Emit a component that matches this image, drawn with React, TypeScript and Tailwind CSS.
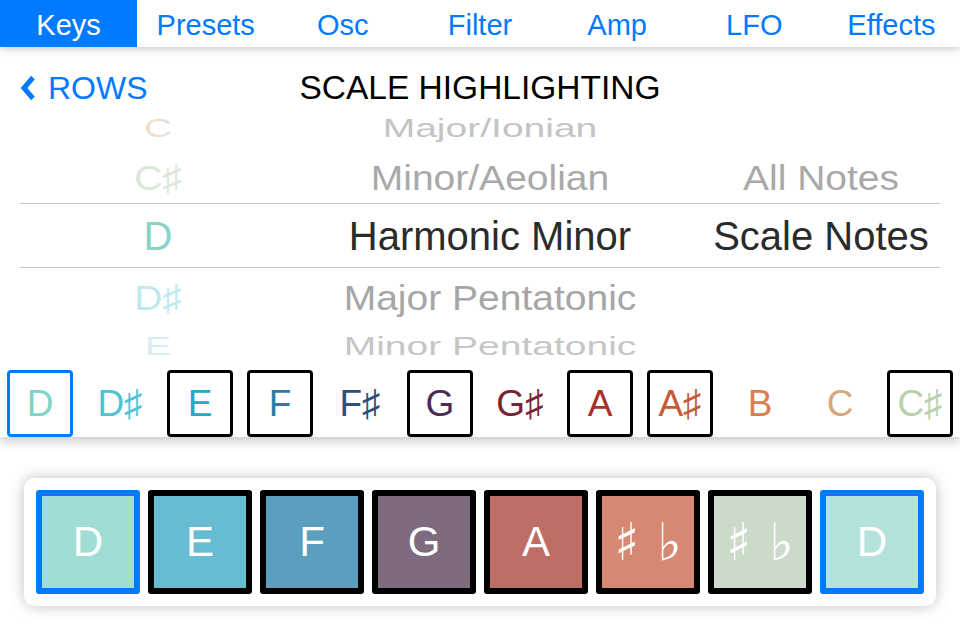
import React from "react";

const tabs = ["Keys", "Presets", "Osc", "Filter", "Amp", "LFO", "Effects"];

type Key = { n: string; c: string; box: "blue" | "black" | null };
const keys: Key[] = [
  { n: "D", c: "#7fd4c6", box: "blue" },
  { n: "D♯", c: "#4fc3d4", box: null },
  { n: "E", c: "#2aa6c6", box: "black" },
  { n: "F", c: "#2a7ea6", box: "black" },
  { n: "F♯", c: "#2f4e7b", box: null },
  { n: "G", c: "#4b2d50", box: "black" },
  { n: "G♯", c: "#7a2334", box: null },
  { n: "A", c: "#a9312b", box: "black" },
  { n: "A♯", c: "#c85a36", box: "black" },
  { n: "B", c: "#d97e4e", box: null },
  { n: "C", c: "#d8a67b", box: null },
  { n: "C♯", c: "#b6d0ab", box: "black" },
];

type Sq = { t: string; bg: string; blue?: boolean; acc?: boolean };
const squares: Sq[] = [
  { t: "D", bg: "#a0ddd4", blue: true },
  { t: "E", bg: "#67bcd2" },
  { t: "F", bg: "#5b9ebd" },
  { t: "G", bg: "#7e6b80" },
  { t: "A", bg: "#bd6e65" },
  { t: "", bg: "#d68873", acc: true },
  { t: "", bg: "#ccdbc9", acc: true },
  { t: "D", bg: "#b3e3dc", blue: true },
];

function PickerRow(props: {
  h: string;
  sy: number;
  size?: string;
  note: string;
  noteColor: string;
  name: string;
  nameColor: string;
  third?: string;
}) {
  const s = { transform: `scaleY(${props.sy})` };
  return (
    <div
      className={
        props.h +
        " grid grid-cols-[316px_348px_1fr] items-center leading-none whitespace-nowrap " +
        (props.size ?? "text-[39px]")
      }
    >
      <div className="flex justify-center">
        <span style={{ ...s, color: props.noteColor }}>{props.note}</span>
      </div>
      <div className="flex justify-center">
        <span style={{ ...s, color: props.nameColor }}>{props.name}</span>
      </div>
      <div className="flex justify-center pl-[18px]">
        <span style={{ ...s, color: props.nameColor }}>{props.third ?? ""}</span>
      </div>
    </div>
  );
}

export default function App() {
  return (
    <div
      className="w-[960px] h-[640px] bg-white overflow-hidden flex flex-col"
      style={{ fontFamily: '"Liberation Sans", Arial, "DejaVu Sans", sans-serif' }}
    >
      {/* Tab bar */}
      <div className="relative z-20 h-[47px] shrink-0 grid grid-cols-7 bg-white shadow-[0_2px_8px_rgba(0,0,0,0.22)]">
        {tabs.map((t, i) => (
          <div
            key={t}
            className={
              "flex items-center justify-center pt-[3px] text-[29px] leading-none " +
              (i === 0 ? "bg-[#007aff] text-white" : "text-[#007aff]")
            }
          >
            {t}
          </div>
        ))}
      </div>

      {/* Top panel */}
      <div className="relative z-10 h-[390px] shrink-0 bg-white shadow-[0_4px_10px_rgba(0,0,0,0.22)] flex flex-col">
        {/* Header */}
        <div className="h-[57px] shrink-0 pt-[25px] grid grid-cols-3 text-[32px] leading-[32px]">
          <div className="flex items-center pl-[20px] text-[#007aff]">
            <svg width="16" height="26" viewBox="0 0 16 26" className="mr-[12px]">
              <path d="M13 2.5 L4 13 L13 23.5" fill="none" stroke="#007aff" strokeWidth="5" strokeLinejoin="miter" />
            </svg>
            <span>ROWS</span>
          </div>
          <div className="flex justify-center whitespace-nowrap text-black text-[33.5px]">SCALE HIGHLIGHTING</div>
          <div />
        </div>

        {/* Picker */}
        <div className="h-[263px] shrink-0 overflow-hidden flex flex-col">
          <PickerRow h="h-[47px]" sy={0.68} note="C" noteColor="#eddfd0" name="Major/Ionian" nameColor="#c4c4c4" />
          <PickerRow h="h-[52px]" sy={0.92} note="C♯" noteColor="#dce8d9" name="Minor/Aeolian" nameColor="#a9a9a9" third="All Notes" />
          <div className="mx-[20px] border-t border-b border-[#c8c8c8]">
            <div className="-mx-[20px]">
              <PickerRow h="h-[63px]" sy={1} size="text-[40px]" note="D" noteColor="#86d4c6" name="Harmonic Minor" nameColor="#2b2b2b" third="Scale Notes" />
            </div>
          </div>
          <PickerRow h="h-[58px]" sy={0.92} note="D♯" noteColor="#bfe9ef" name="Major Pentatonic" nameColor="#a6a6a6" />
          <PickerRow h="h-[40px]" sy={0.66} note="E" noteColor="#d6eff3" name="Minor Pentatonic" nameColor="#c6c6c6" />
        </div>

        {/* Key row */}
        <div className="flex-1 flex items-end gap-[14px] px-[7px]">
          {keys.map((k) => (
            <div
              key={k.n}
              className={
                "w-[66px] h-[67px] shrink-0 flex items-center justify-center rounded-[4px] text-[37px] leading-none whitespace-nowrap " +
                (k.box === "blue"
                  ? "border-[3px] border-[#007aff]"
                  : k.box === "black"
                  ? "border-[3px] border-black"
                  : "border-[3px] border-transparent")
              }
              style={{ color: k.c }}
            >
              {k.n}
            </div>
          ))}
        </div>
      </div>

      {/* Bottom card */}
      <div className="pt-[41px] px-[24px]">
        <div className="bg-white rounded-[10px] shadow-[0_0_14px_rgba(0,0,0,0.25)] p-[12px] flex gap-[8px]">
          {squares.map((s, i) => (
            <div
              key={i}
              className={
                "w-[104px] h-[104px] shrink-0 rounded-[3px] border-[6px] flex items-center justify-center text-white text-[42px] leading-none " +
                (s.blue ? "border-[#007aff]" : "border-black")
              }
              style={{ backgroundColor: s.bg }}
            >
              {s.acc ? (
                <span
                  className="flex items-center gap-[18px] text-[52px] leading-none"
                  style={{ fontFamily: '"DejaVu Sans", sans-serif' }}
                >
                  <span className="font-bold">♯</span>
                  <span>♭</span>
                </span>
              ) : (
                s.t
              )}
            </div>
          ))}
        </div>
      </div>
    </div>
  );
}
